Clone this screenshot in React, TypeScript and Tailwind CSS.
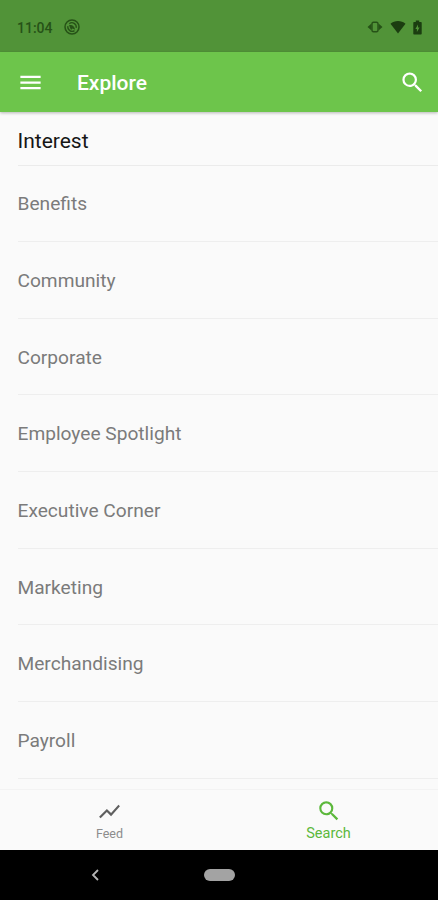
import { MdMenu, MdSearch, MdShowChart } from "react-icons/md";

const interests = [
  "Benefits",
  "Community",
  "Corporate",
  "Employee Spotlight",
  "Executive Corner",
  "Marketing",
  "Merchandising",
  "Payroll",
];

const StatusBar = () => (
  <div className="flex h-[52px] shrink-0 items-center bg-[#519338] pl-[17px] pr-[16px] pt-[2px] text-[#265217]">
    <span className="w-[47px] pt-px text-[14px] leading-none font-medium">11:04</span>
    <svg className="h-4 w-4" viewBox="0 0 16 16" fill="none" stroke="currentColor">
      <circle cx="8" cy="8" r="7" strokeWidth="1.5" />
      <path d="M10.5 11.6A4.300 4.300 0 0 1 3.900 7.200M5.300 4.700A4.300 4.300 0 0 1 12.200 8.800" strokeWidth="1.3" />
      <path d="M5 6.300c2.500-1 5.500.2 6.200 4.500L8.500 9.500 7 11z" fill="currentColor" stroke="none" />
    </svg>
    <div className="ml-auto flex items-center">
      <svg className="h-[14px] w-[16px]" viewBox="0 0 16 14">
        <path d="M.500 7l4-3.500v7zM15.500 7l-4-3.500v7z" fill="currentColor" />
        <rect x="5" y="2.200" width="6" height="9.600" rx="1.500" fill="none" stroke="currentColor" strokeWidth="1.400" />
      </svg>
      <svg className="ml-[7px] h-[14px] w-[16px] text-[#1b3d10]" viewBox="0 0 16 14">
        <path d="M8 13.5L.5 3.7C4.500 0 11.500 0 15.500 3.700z" fill="currentColor" />
      </svg>
      <svg className="ml-[7px] h-[15px] w-[9px] text-[#1b3d10]" viewBox="0 0 9 15">
        <path
          d="M2.800 0.500h3.400v1.500H8a.7.7 0 0 1 .7.7v11a.7.7 0 0 1-.7.7H1a.7.7 0 0 1-.7-.7v-11A.7.7 0 0 1 1 2h1.800zM5 4.500L2.400 9h1.500v3l2.700-4.500H5z"
          fill="currentColor"
          fillRule="evenodd"
        />
      </svg>
    </div>
  </div>
);

const AppBar = () => (
  <header className="z-10 flex h-[60px] shrink-0 items-center bg-[#6dc54b] pl-[17px] pr-[12px] text-white shadow-[0_1px_3px_rgba(0,0,0,0.28)]">
    <MdMenu size={27} />
    <h1 className="ml-[33px] pt-[2px] text-[21px] leading-none font-medium">Explore</h1>
    <MdSearch size={27} className="ml-auto" />
  </header>
);

const InterestList = () => (
  <main className="min-h-0 flex-1 overflow-hidden pl-[17.5px]">
    <h2 className="flex h-[53.5px] items-center border-b border-[#ebebeb] pt-[7px] text-[21px] text-[#161616]">
      Interest
    </h2>
    <ul>
      {interests.map((interest) => (
        <li
          key={interest}
          className="flex h-[76.65px] items-center border-b border-[#eeeeee] pt-[3px] text-[19.15px] text-[#7b7b7b]"
        >
          {interest}
        </li>
      ))}
    </ul>
  </main>
);

const BottomNav = () => (
  <nav className="grid h-[61px] shrink-0 grid-cols-2 border-t border-[#f3f3f3] text-center leading-none">
    <div className="flex flex-col items-center pt-[9px] text-[#8c8c8c]">
      <MdShowChart size={25} className="text-[#5f5f5f]" />
      <span className="mt-[4px] text-[12.5px]">Feed</span>
    </div>
    <div className="flex flex-col items-center pt-[8px] text-[#5cb83c]">
      <MdSearch size={26} />
      <span className="mt-[3px] text-[14.5px]">Search</span>
    </div>
  </nav>
);

const SystemNav = () => (
  <div className="flex h-[50px] shrink-0 items-center bg-black pl-[91px]">
    <svg className="h-3 w-2" viewBox="0 0 8 12" fill="none" stroke="#b5b5b5" strokeWidth="1.8">
      <path d="M7 1L2 6l5 5" />
    </svg>
    <div className="ml-[105px] h-3 w-[31px] rounded-full bg-[#a3a3a3]" />
  </div>
);

export default function App() {
  return (
    <div className="flex h-[900px] w-full flex-col overflow-hidden bg-[#fafafa] font-['Roboto',sans-serif]">
      <StatusBar />
      <AppBar />
      <InterestList />
      <BottomNav />
      <SystemNav />
    </div>
  );
}
